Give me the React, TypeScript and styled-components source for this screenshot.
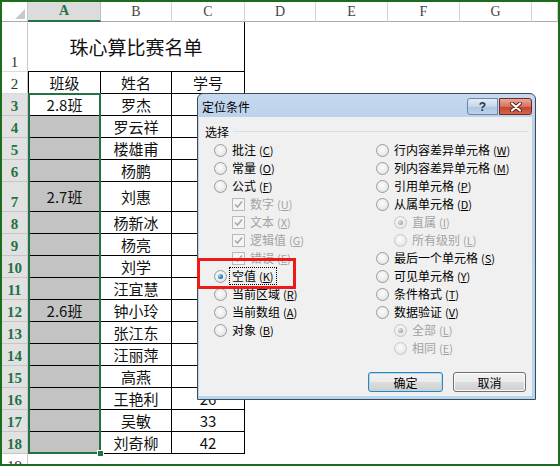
import React from "react";
import styled, { createGlobalStyle, css } from "styled-components";

const GlobalStyle = createGlobalStyle`
  html, body {
    margin: 0;
    padding: 0;
    background: #fff;
  }
  * {
    box-sizing: border-box;
  }
`;

const GREEN = "#217346";
const CJK = `"Noto Sans CJK SC", "Noto Sans", sans-serif`;

const COLS = ["A", "B", "C", "D", "E", "F", "G"];
const names = [
  "罗杰", "罗云祥", "楼雄甫", "杨鹏", "刘惠", "杨新冰", "杨亮", "刘学",
  "汪宜慧", "钟小玲", "张江东", "汪丽萍", "高燕", "王艳利", "吴敏", "刘奇柳",
];
// only the last numbers show below the dialog
const ids: Record<number, string> = { 16: "26", 17: "33", 18: "42" };
const klass: Record<number, string> = { 3: "2.8班", 7: "2.7班", 12: "2.6班" };

//Interface for dialog options
interface IOpt {
  kind: "radio" | "check";
  label: string;
  hot: string;
  checked?: boolean;
  disabled?: boolean;
  indent?: boolean;
  focus?: boolean;
}

const leftOpts: IOpt[] = [
  { kind: "radio", label: "批注", hot: "C" },
  { kind: "radio", label: "常量", hot: "O" },
  { kind: "radio", label: "公式", hot: "F" },
  { kind: "check", label: "数字", hot: "U", checked: true, disabled: true, indent: true },
  { kind: "check", label: "文本", hot: "X", checked: true, disabled: true, indent: true },
  { kind: "check", label: "逻辑值", hot: "G", checked: true, disabled: true, indent: true },
  { kind: "check", label: "错误", hot: "E", checked: true, disabled: true, indent: true },
  { kind: "radio", label: "空值", hot: "K", checked: true, focus: true },
  { kind: "radio", label: "当前区域", hot: "R" },
  { kind: "radio", label: "当前数组", hot: "A" },
  { kind: "radio", label: "对象", hot: "B" },
];

const rightOpts: IOpt[] = [
  { kind: "radio", label: "行内容差异单元格", hot: "W" },
  { kind: "radio", label: "列内容差异单元格", hot: "M" },
  { kind: "radio", label: "引用单元格", hot: "P" },
  { kind: "radio", label: "从属单元格", hot: "D" },
  { kind: "radio", label: "直属", hot: "I", checked: true, disabled: true, indent: true },
  { kind: "radio", label: "所有级别", hot: "L", disabled: true, indent: true },
  { kind: "radio", label: "最后一个单元格", hot: "S" },
  { kind: "radio", label: "可见单元格", hot: "Y" },
  { kind: "radio", label: "条件格式", hot: "T" },
  { kind: "radio", label: "数据验证", hot: "V" },
  { kind: "radio", label: "全部", hot: "L", checked: true, disabled: true, indent: true },
  { kind: "radio", label: "相同", hot: "E", disabled: true, indent: true },
];

const Option = ({ opt }: { opt: IOpt }) => (
  <OptRow $indent={opt.indent} $disabled={opt.disabled}>
    {opt.kind === "radio" ? (
      <Radio $on={opt.checked} $off={opt.disabled} />
    ) : (
      <Check>
        <svg width="11" height="11" viewBox="0 0 11 11">
          <path d="M2 5.5 L4.5 8 L9 2.5" fill="none" stroke="#a9a9a9" strokeWidth="1.6" />
        </svg>
      </Check>
    )}
    <OptLabel $focus={opt.focus}>
      {opt.label}
      <Hot>
        (<u>{opt.hot}</u>)
      </Hot>
    </OptLabel>
  </OptRow>
);

const App = () => {
  const rows = Array.from({ length: 19 }, (_, i) => i + 1);
  return (
    <>
      <GlobalStyle />
      <Frame>
        <Sheet>
          <Corner>
            <CornerMark />
          </Corner>
          {COLS.map((l, i) => (
            <ColHead key={l} $c={i + 2} $active={l === "A"}>
              {l}
            </ColHead>
          ))}
          <ColHead $c={9} />
          {rows.map((r) => (
            <RowHead key={r} $r={r + 1} $sel={r >= 3 && r <= 18}>
              {r}
            </RowHead>
          ))}

          <Cell $r={2} $c={2} $cs={3} $lined $big>
            珠心算比赛名单
          </Cell>
          <Cell $r={3} $c={2} $lined $left>班级</Cell>
          <Cell $r={3} $c={3} $lined>姓名</Cell>
          <Cell $r={3} $c={4} $lined>学号</Cell>

          {names.map((n, i) => {
            const r = i + 3;
            return (
              <React.Fragment key={n}>
                <Cell $r={r + 1} $c={2} $lined $left $shade={r > 3}>
                  {klass[r] ?? ""}
                </Cell>
                <Cell $r={r + 1} $c={3} $lined>{n}</Cell>
                <Cell $r={r + 1} $c={4} $lined>{ids[r] ?? ""}</Cell>
              </React.Fragment>
            );
          })}

          <Selection>
            <FillHandle />
          </Selection>
        </Sheet>

        <Dialog>
          <TitleBar>
            <TitleText>定位条件</TitleText>
            <TitleButtons>
              <HelpBtn>?</HelpBtn>
              <CloseBtn>
                <svg width="14" height="10" viewBox="0 0 14 10">
                  <path d="M3 1.5 L11 8.5 M11 1.5 L3 8.5" stroke="#5b1c12" strokeWidth="4" strokeLinecap="round" />
                  <path d="M3 1.5 L11 8.5 M11 1.5 L3 8.5" stroke="#fff" strokeWidth="2.2" strokeLinecap="round" />
                </svg>
              </CloseBtn>
            </TitleButtons>
          </TitleBar>
          <Body>
            <GroupHead>
              <span>选择</span>
              <GroupLine />
            </GroupHead>
            <Options>
              <OptCol>
                {leftOpts.map((o) => (
                  <Option key={o.label} opt={o} />
                ))}
              </OptCol>
              <OptCol>
                {rightOpts.map((o) => (
                  <Option key={o.label} opt={o} />
                ))}
              </OptCol>
            </Options>
            <Buttons>
              <Btn type="button" $w={75} $default>
                确定
              </Btn>
              <Btn type="button" $w={73}>
                取消
              </Btn>
            </Buttons>
          </Body>
          <Highlight />
        </Dialog>
      </Frame>
    </>
  );
};

const Frame = styled.div`
  position: relative;
  width: 560px;
  height: 466px;
  border: 2px solid #1b6d1b;
  overflow: hidden;
  background: #fff;
`;

const Sheet = styled.div`
  display: grid;
  grid-template-columns: 26px 73px 71px 73px 71px 72px 72px 72px 1fr;
  grid-template-rows: 20px 50px repeat(5, 22px) 30px repeat(11, 22px) 22px;
  font-family: ${CJK};
`;

const Corner = styled.div`
  grid-row: 1;
  grid-column: 1;
  position: relative;
  border-right: 1px solid #c8c8c8;
  border-bottom: 1px solid #ababab;
`;

const CornerMark = styled.span`
  position: absolute;
  right: 2px;
  bottom: 2px;
  width: 0;
  height: 0;
  border-left: 10px solid transparent;
  border-bottom: 10px solid #c9c9c9;
`;

const ColHead = styled.div<{ $c: number; $active?: boolean }>`
  grid-row: 1;
  grid-column: ${(p) => p.$c};
  display: flex;
  align-items: flex-end;
  justify-content: center;
  padding-bottom: 1px;
  font-family: "Liberation Serif", "DejaVu Serif", serif;
  font-size: 14px;
  line-height: 16px;
  color: #444;
  border-right: 1px solid #d4d4d4;
  border-bottom: 1px solid #ababab;
  ${(p) =>
    p.$active &&
    css`
      background: #dcdcdc;
      color: ${GREEN};
      font-weight: bold;
      border-bottom: 2px solid ${GREEN};
      border-right-color: #bdbdbd;
    `}
`;

const RowHead = styled.div<{ $r: number; $sel?: boolean }>`
  grid-row: ${(p) => p.$r};
  grid-column: 1;
  display: flex;
  align-items: flex-end;
  justify-content: center;
  padding-bottom: 1px;
  font-family: "Liberation Serif", "DejaVu Serif", serif;
  font-size: 15px;
  line-height: 15px;
  color: #333;
  background: #fff;
  border-right: 1px solid #c8c8c8;
  border-bottom: 1px solid #dadada;
  ${(p) =>
    p.$sel &&
    css`
      background: #e1e1e1;
      color: ${GREEN};
      font-weight: bold;
      border-bottom-color: #c6c6c6;
    `}
`;

const Cell = styled.div<{
  $r: number;
  $c: number;
  $cs?: number;
  $lined?: boolean;
  $left?: boolean;
  $shade?: boolean;
  $big?: boolean;
}>`
  grid-row: ${(p) => p.$r};
  grid-column: ${(p) => p.$c} / span ${(p) => p.$cs ?? 1};
  display: flex;
  align-items: center;
  justify-content: center;
  font-size: ${(p) => (p.$big ? 19 : 15)}px;
  color: #111;
  background: ${(p) => (p.$shade ? "#c3c3c3" : "#fff")};
  border-right: ${(p) => (p.$lined ? "1px solid #000" : "none")};
  border-bottom: ${(p) => (p.$lined ? "1px solid #000" : "none")};
  border-left: ${(p) => (p.$left ? "1px solid #000" : "none")};
`;

const Selection = styled.div`
  grid-row: 4 / 20;
  grid-column: 2 / 3;
  position: relative;
  margin-top: -1px;
  border: 2px solid ${GREEN};
  pointer-events: none;
  z-index: 2;
`;

const FillHandle = styled.span`
  position: absolute;
  right: -5px;
  bottom: -5px;
  width: 7px;
  height: 7px;
  background: ${GREEN};
  border: 1px solid #fff;
`;

const Dialog = styled.div`
  position: absolute;
  left: 195px;
  top: 91px;
  z-index: 5;
  width: 339px;
  height: 307px;
  display: flex;
  flex-direction: column;
  padding: 0 3px 3px 1px;
  border: 1px solid #3f4a59;
  border-radius: 6px 6px 0 0;
  background: linear-gradient(#c6d9ef, #b9d1ea 30px, #b4d6ee);
  font-family: ${CJK};
  font-size: 12px;
  color: #000;
`;

const TitleBar = styled.div`
  height: 23px;
  display: flex;
  justify-content: space-between;
  align-items: flex-start;
  padding-left: 3px;
`;

const TitleText = styled.span`
  line-height: 26px;
`;

const TitleButtons = styled.div`
  display: flex;
  gap: 1px;
  margin-top: 4px;
`;

const HelpBtn = styled.span`
  width: 31px;
  height: 17px;
  display: flex;
  align-items: center;
  justify-content: center;
  border: 1px solid #6a86aa;
  border-radius: 3px 0 0 3px;
  background: linear-gradient(#e3ecf7, #c6d7ec 50%, #adc4e0 51%, #bed2ea);
  font-family: "Liberation Sans", sans-serif;
  font-weight: bold;
  font-size: 12px;
  color: #1d3658;
`;

const CloseBtn = styled.span`
  width: 33px;
  height: 17px;
  display: flex;
  align-items: center;
  justify-content: center;
  border: 1px solid #6e2a20;
  border-radius: 0 3px 3px 0;
  background: linear-gradient(#e9a99b, #d5735f 50%, #c2432d 51%, #d9634b);
`;

const Body = styled.div`
  flex: 1;
  display: flex;
  flex-direction: column;
  background: #f0f0f0;
  padding-top: 6px;
`;

const GroupHead = styled.div`
  height: 16px;
  display: flex;
  align-items: center;
  margin: 0 4px 0 6px;
  font-size: 12px;
`;

const GroupLine = styled.span`
  flex: 1;
  height: 1px;
  margin-left: 4px;
  background: #d5dfe5;
`;

const Options = styled.div`
  display: grid;
  grid-template-columns: 162px 1fr;
  margin: 2px 0 0 15px;
`;

const OptCol = styled.div`
  display: flex;
  flex-direction: column;
`;

const OptRow = styled.div<{ $indent?: boolean; $disabled?: boolean }>`
  height: 18px;
  display: flex;
  align-items: center;
  gap: 4px;
  padding-left: ${(p) => (p.$indent ? 18 : 0)}px;
  color: ${(p) => (p.$disabled ? "#a3a3a3" : "#000")};
  white-space: nowrap;
`;

const Radio = styled.span<{ $on?: boolean; $off?: boolean }>`
  position: relative;
  flex: none;
  width: 13px;
  height: 13px;
  border-radius: 50%;
  border: 1px solid ${(p) => (p.$off ? "#c8c8c8" : "#9a9b9b")};
  background: radial-gradient(circle at 45% 40%, #fcfcfc 0%, #ececec 55%, #d6d6d6 100%);
  ${(p) =>
    p.$on &&
    css`
      &::after {
        content: "";
        position: absolute;
        left: 3px;
        top: 3px;
        width: 5px;
        height: 5px;
        border-radius: 50%;
        background: ${p.$off
          ? "radial-gradient(circle at 35% 35%, #e2e2e2, #8e8e8e)"
          : "radial-gradient(circle at 35% 35%, #9ad7ff, #2a6fc0 60%, #123f7e)"};
      }
    `}
`;

const Check = styled.span`
  flex: none;
  width: 13px;
  height: 13px;
  display: flex;
  align-items: center;
  justify-content: center;
  border: 1px solid #b9b9b9;
  background: #f4f4f4;
`;

const OptLabel = styled.span<{ $focus?: boolean }>`
  line-height: 13px;
  padding: 0 1px;
  ${(p) =>
    p.$focus &&
    css`
      outline: 1px dotted #000;
      outline-offset: 1px;
    `}
`;

const Hot = styled.span`
  margin-left: 3px;
  font-size: 11px;
`;

const Buttons = styled.div`
  display: flex;
  justify-content: flex-end;
  gap: 10px;
  margin-top: 15px;
  padding-right: 6px;
`;

const Btn = styled.button<{ $w: number; $default?: boolean }>`
  width: ${(p) => p.$w}px;
  height: 20px;
  padding: 0;
  border: 1px solid ${(p) => (p.$default ? "#3c7fb1" : "#707070")};
  border-radius: 3px;
  background: linear-gradient(#f2f2f2 0%, #ebebeb 50%, #dddddd 51%, #cfcfcf 100%);
  box-shadow: inset 0 0 0 1px ${(p) => (p.$default ? "#a6dcf5" : "#fbfbfb")};
  font-family: ${CJK};
  font-size: 12px;
  color: #000;
`;

const Highlight = styled.div`
  position: absolute;
  left: -1px;
  top: 164px;
  width: 99px;
  height: 31px;
  border: 3px solid #ee1a1a;
  pointer-events: none;
`;

export default App;
